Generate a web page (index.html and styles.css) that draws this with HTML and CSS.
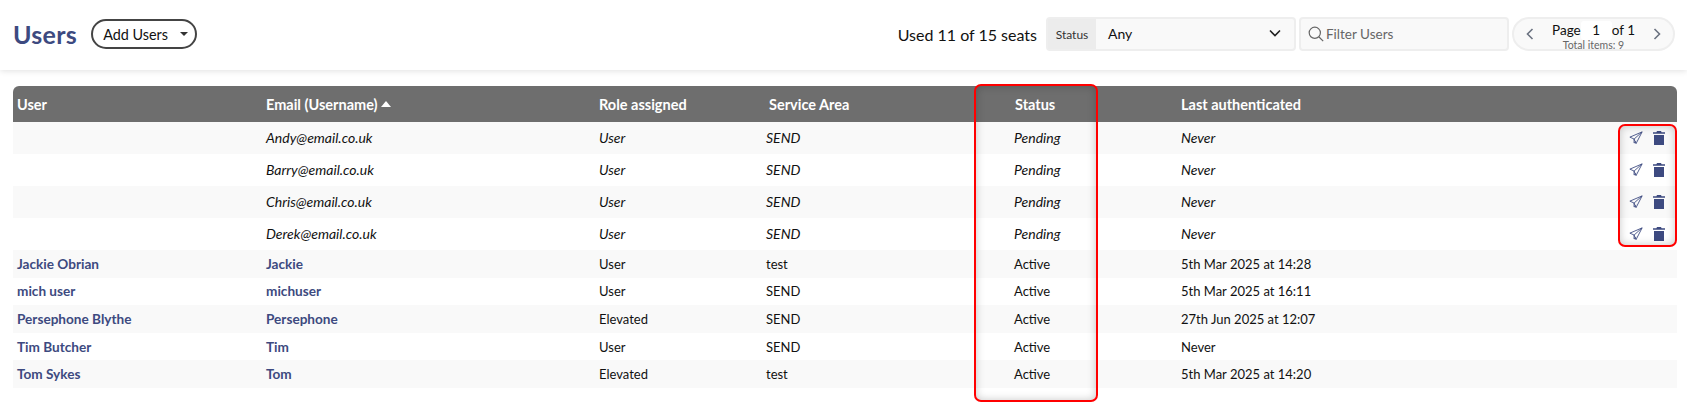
FILE: index.html
```html
<!DOCTYPE html>
<html lang="en">
<head>
<meta charset="utf-8">
<title>Users</title>
<link rel="stylesheet" href="styles.css">
</head>
<body>
<header class="topbar">
  <h1 class="title">Users</h1>
  <button class="add-btn">Add Users<span class="caret"></span></button>
  <div class="seats">Used 11 of 15 seats</div>
  <div class="status-filter">
    <span class="status-label">Status</span>
    <span class="status-value">Any
      <svg class="chev" width="12" height="8" viewBox="0 0 12 8"><path d="M1 1.5l5 5 5-5" fill="none" stroke="#222" stroke-width="1.6"/></svg>
    </span>
  </div>
  <div class="search">
    <svg width="16" height="16" viewBox="0 0 16 16"><circle cx="6.8" cy="6.8" r="5.6" fill="none" stroke="#666" stroke-width="1.2"/><path d="M11 11l4.2 4.2" stroke="#666" stroke-width="1.2"/></svg>
    <span>Filter Users</span>
  </div>
  <div class="pager">
    <svg width="8" height="12" viewBox="0 0 8 12"><path d="M6.5 1L1.5 6l5 5" fill="none" stroke="#6b7280" stroke-width="1.6"/></svg>
    <div class="pager-mid">
      <div class="pager-line"><span>Page</span><span class="page-box">1</span><span>of 1</span></div>
      <div class="pager-total">Total items: 9</div>
    </div>
    <svg width="8" height="12" viewBox="0 0 8 12"><path d="M1.5 1l5 5-5 5" fill="none" stroke="#6b7280" stroke-width="1.6"/></svg>
  </div>
</header>

<main class="table">
  <div class="row head">
    <div>User</div>
    <div class="sorted">Email (Username)<span class="sort-up"></span></div>
    <div>Role assigned</div>
    <div class="head-service">Service Area</div>
    <div class="head-status">Status</div>
    <div>Last authenticated</div>
    <div></div>
  </div>

  <div class="row pending odd"><div></div><div>Andy@email.co.uk</div><div>User</div><div>SEND</div><div>Pending</div><div>Never</div>
    <div class="actions"><svg class="i-send" viewBox="0 0 16 16"><path d="M15 1L1 7l4.8 2.2L15 1zM15 1L8 14.5 5.8 9.2M5.8 9.2v4.6l2.4-2.2" fill="none" stroke="#3d4a80" stroke-width="1" stroke-linejoin="round"/></svg><svg class="i-trash" viewBox="0 0 12 14"><path d="M4 0h4l.6 1.2H12v1.6H0V1.2h3.4zM1 4h10v10H1z" fill="#3d4a80"/></svg></div></div>
  <div class="row pending"><div></div><div>Barry@email.co.uk</div><div>User</div><div>SEND</div><div>Pending</div><div>Never</div>
    <div class="actions"><svg class="i-send" viewBox="0 0 16 16"><path d="M15 1L1 7l4.8 2.2L15 1zM15 1L8 14.5 5.8 9.2M5.8 9.2v4.6l2.4-2.2" fill="none" stroke="#3d4a80" stroke-width="1" stroke-linejoin="round"/></svg><svg class="i-trash" viewBox="0 0 12 14"><path d="M4 0h4l.6 1.2H12v1.6H0V1.2h3.4zM1 4h10v10H1z" fill="#3d4a80"/></svg></div></div>
  <div class="row pending odd"><div></div><div>Chris@email.co.uk</div><div>User</div><div>SEND</div><div>Pending</div><div>Never</div>
    <div class="actions"><svg class="i-send" viewBox="0 0 16 16"><path d="M15 1L1 7l4.8 2.2L15 1zM15 1L8 14.5 5.8 9.2M5.8 9.2v4.6l2.4-2.2" fill="none" stroke="#3d4a80" stroke-width="1" stroke-linejoin="round"/></svg><svg class="i-trash" viewBox="0 0 12 14"><path d="M4 0h4l.6 1.2H12v1.6H0V1.2h3.4zM1 4h10v10H1z" fill="#3d4a80"/></svg></div></div>
  <div class="row pending"><div></div><div>Derek@email.co.uk</div><div>User</div><div>SEND</div><div>Pending</div><div>Never</div>
    <div class="actions"><svg class="i-send" viewBox="0 0 16 16"><path d="M15 1L1 7l4.8 2.2L15 1zM15 1L8 14.5 5.8 9.2M5.8 9.2v4.6l2.4-2.2" fill="none" stroke="#3d4a80" stroke-width="1" stroke-linejoin="round"/></svg><svg class="i-trash" viewBox="0 0 12 14"><path d="M4 0h4l.6 1.2H12v1.6H0V1.2h3.4zM1 4h10v10H1z" fill="#3d4a80"/></svg></div></div>

  <div class="row active odd"><div class="link">Jackie Obrian</div><div class="link">Jackie</div><div>User</div><div>test</div><div>Active</div><div>5th Mar 2025 at 14:28</div><div></div></div>
  <div class="row active"><div class="link">mich user</div><div class="link">michuser</div><div>User</div><div>SEND</div><div>Active</div><div>5th Mar 2025 at 16:11</div><div></div></div>
  <div class="row active odd"><div class="link">Persephone Blythe</div><div class="link">Persephone</div><div>Elevated</div><div>SEND</div><div>Active</div><div>27th Jun 2025 at 12:07</div><div></div></div>
  <div class="row active"><div class="link">Tim Butcher</div><div class="link">Tim</div><div>User</div><div>SEND</div><div>Active</div><div>Never</div><div></div></div>
  <div class="row active odd"><div class="link">Tom Sykes</div><div class="link">Tom</div><div>Elevated</div><div>test</div><div>Active</div><div>5th Mar 2025 at 14:20</div><div></div></div>
</main>

<div class="mark mark-status"></div>
<div class="mark mark-actions"></div>
</body>
</html>
```

FILE: styles.css
```css
* { box-sizing: border-box; }
html, body { margin: 0; height: 404px; overflow: hidden; background: #fff; }
body { font-family: Lato, "Noto Sans", sans-serif; color: #111; position: relative; }

.topbar {
  height: 70px;
  display: flex;
  align-items: center;
  padding: 0 12px 2px 13px;
  background: #fff;
  box-shadow: 0 1px 6px rgba(0, 0, 0, .12);
}
.title { margin: 0 14px 0 0; font-size: 25px; font-weight: 700; color: #3d4a80; letter-spacing: .3px; }
.add-btn {
  width: 106px; height: 30px; padding: 0 0 0 10px;
  display: flex; align-items: center;
  border: 2px solid #444; border-radius: 15px; background: #fff;
  font: 400 14.4px Lato, sans-serif; color: #111;
}
.caret { margin-left: 12px; border: 4px solid transparent; border-top-color: #333; border-bottom: 0; }
.seats { margin-left: auto; font-size: 16px; margin-right: 9px; }

.status-filter {
  width: 250px; height: 34px; display: flex;
  border: 2px solid #eee; border-radius: 4px; background: #f9f9f9;
}
.status-label { width: 48px; background: #ececec; font-size: 12px; display: flex; align-items: center; justify-content: center; color: #333; }
.status-value { flex: 1; display: flex; align-items: center; justify-content: space-between; padding: 0 13px 2px 12px; font-size: 14px; }

.search {
  width: 210px; height: 34px; margin-left: 3px; padding-left: 7px;
  display: flex; align-items: center; gap: 2px;
  border: 2px solid #eee; border-radius: 4px; background: #f9f9f9;
  font-size: 13.5px; color: #666;
}

.pager {
  width: 163px; height: 34px; margin-left: 3px; padding: 0 12px;
  display: flex; align-items: center; justify-content: space-between;
  border: 2px solid #eee; border-radius: 17px; background: #f9f9f9;
}
.pager-mid { text-align: center; margin-top: 2px; }
.pager-line { display: flex; align-items: center; justify-content: center; font-size: 13.5px; line-height: 19px; height: 19px; }
.page-box { width: 31px; background: #fff; text-align: center; border-radius: 3px; }
.pager-total { font-size: 10.5px; line-height: 10px; color: #666; }

.table { margin: 16px 10px 0 13px; }
.row {
  display: grid;
  grid-template-columns: 250px 333px 167px 248px 167px 1fr 60px;
  height: 27.6px;
  align-items: center;
  font-size: 13px;
  color: #111;
}
.row > div { padding-left: 3px; }
.row > div:first-child { padding-left: 4px; }
.row.odd { background: #f9f9f9; }
.head {
  height: 36px; background: #6e6e6e; color: #fff; font-weight: 700; font-size: 14.5px;
  border-radius: 6px 6px 0 0;
}
.sorted { display: flex; align-items: center; gap: 3px; }
.sort-up { border: 5px solid transparent; border-bottom: 6px solid #fff; border-top: 0; }
.head .head-service { padding-left: 6px; }
.head .head-status { padding-left: 4px; }
.row.pending { height: 32px; font-style: italic; font-size: 14px; padding-bottom: 1px; }
.row .link { color: #3d4a80; font-weight: 700; font-size: 13.6px; }
.row .actions { display: flex; align-items: center; gap: 10px; padding-left: 12px; }
.i-send { width: 14px; height: 14px; }
.i-trash { width: 12px; height: 14px; }

.mark { position: absolute; border: 2px solid #f00; border-radius: 7px; box-shadow: inset 0 0 8px rgba(0, 0, 0, .22); pointer-events: none; }
.mark-status { left: 974px; top: 84px; width: 124px; height: 318px; }
.mark-actions { left: 1618px; top: 124px; width: 59px; height: 123px; }
```
